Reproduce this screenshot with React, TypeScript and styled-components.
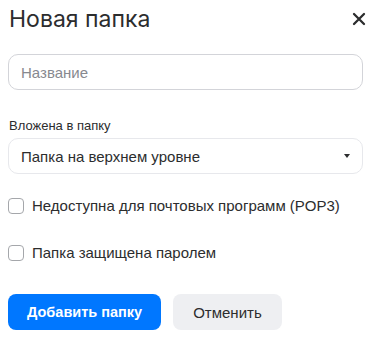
import React from "react";
import styled, { createGlobalStyle } from "styled-components";

const Global = createGlobalStyle`
  html, body { margin: 0; padding: 0; background: #fff; }
  body { font-family: "Liberation Sans", Arial, sans-serif; color: #2c2d2e; }
  * { box-sizing: border-box; }
`;

const Dialog = styled.div`
  width: 374px;
  height: 337px;
  padding: 0 11px 0 8px;
  display: flex;
  flex-direction: column;
`;

const Header = styled.div`
  display: flex;
  align-items: center;
  justify-content: space-between;
  height: 38px;
`;

const Title = styled.h1`
  margin: 0 0 0 1px;
  font-family: Inter, "Noto Sans", sans-serif;
  font-weight: 400;
  font-size: 23px;
  line-height: 38px;
  color: #2c2d2e;
`;

const CloseButton = styled.button`
  border: 0;
  background: none;
  padding: 0;
  width: 14px;
  height: 14px;
  margin-right: -3px;
  display: flex;
  cursor: pointer;
`;

const Field = styled.div<{ $border: string }>`
  height: 36px;
  border: 1px solid ${(p) => p.$border};
  border-radius: 10px;
  display: flex;
  align-items: center;
  padding: 0 12px;
  font-size: 15px;
`;

const Placeholder = styled.span`
  color: #87898f;
`;

const Value = styled.span`
  color: #2c2d2e;
  flex: 1;
`;

const Label = styled.div`
  font-size: 13px;
  line-height: 16px;
  color: #2c2d2e;
  margin: 0 0 4px 1px;
`;

const Arrow = styled.span`
  width: 0;
  height: 0;
  border-left: 3px solid transparent;
  border-right: 3px solid transparent;
  border-top: 4px solid #2c2d2e;
`;

const CheckRow = styled.label`
  display: flex;
  align-items: center;
  gap: 8px;
  font-size: 15px;
  line-height: 20px;
  color: #2c2d2e;
  height: 20px;
`;

const Box = styled.span`
  width: 16px;
  height: 16px;
  border: 1px solid #a5a7ab;
  border-radius: 4px;
  background: #fff;
  flex: none;
`;

const Actions = styled.div`
  display: flex;
  gap: 12px;
`;

const Button = styled.button<{ $primary?: boolean }>`
  height: 36px;
  border: 0;
  border-radius: 8px;
  font-family: "Liberation Sans", Arial, sans-serif;
  font-size: ${(p) => (p.$primary ? 14.5 : 15)}px;
  font-weight: ${(p) => (p.$primary ? 700 : 400)};
  padding: 0 ${(p) => (p.$primary ? 19 : 20)}px;
  background: ${(p) => (p.$primary ? "#0077ff" : "#eeeff2")};
  color: ${(p) => (p.$primary ? "#fff" : "#2c2d2e")};
  cursor: pointer;
`;

const Spacer = styled.div<{ $h: number }>`
  height: ${(p) => p.$h}px;
  flex: none;
`;

export default function App() {
  return (
    <>
      <Global />
      <Dialog>
        <Header>
          <Title>Новая папка</Title>
          <CloseButton aria-label="Закрыть">
            <svg width="14" height="14" viewBox="0 0 14 14">
              <path d="M2 2 L12 12 M12 2 L2 12" stroke="#2c2d2e" strokeWidth="2.3" strokeLinecap="round" />
            </svg>
          </CloseButton>
        </Header>
        <Spacer $h={16} />
        <Field $border="#d3d4d9">
          <Placeholder>Название</Placeholder>
        </Field>
        <Spacer $h={28} />
        <Label>Вложена в папку</Label>
        <Field $border="#e7e8ec">
          <Value>Папка на верхнем уровне</Value>
          <Arrow />
        </Field>
        <Spacer $h={22} />
        <CheckRow>
          <Box />
          Недоступна для почтовых программ (POP3)
        </CheckRow>
        <Spacer $h={27} />
        <CheckRow>
          <Box />
          Папка защищена паролем
        </CheckRow>
        <Spacer $h={31} />
        <Actions>
          <Button $primary>Добавить папку</Button>
          <Button>Отменить</Button>
        </Actions>
      </Dialog>
    </>
  );
}
